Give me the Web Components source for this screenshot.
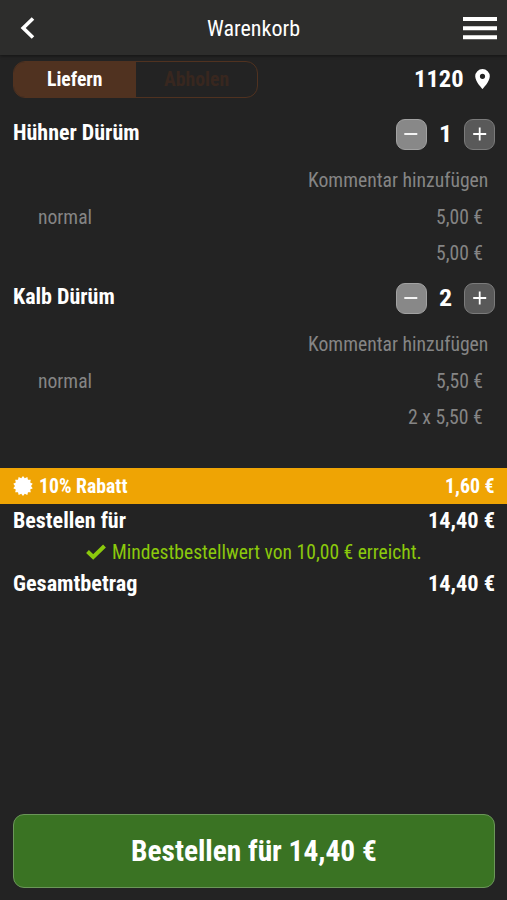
<!DOCTYPE html>
<html lang="de">
<head>
<meta charset="utf-8">
<meta name="viewport" content="width=device-width, initial-scale=1">
<title>Warenkorb</title>
<style>
    body {
        margin: 0;
        background: #232323;
        color: #fff;
        font-family: "Roboto Condensed", Roboto, "Liberation Sans", sans-serif;
        font-stretch: 75%;
    }
</style>
</head>
<body>
<cart-page></cart-page>

<script>
// One line of text, condensed to a given width in pixels
class FitText extends HTMLElement {
    connectedCallback() {
        const shadowRoot = this.attachShadow({ mode: 'open' });
        const width = parseFloat(this.getAttribute('width'));
        shadowRoot.innerHTML = `
            <style>
                :host { display: block; flex: none; width: ${width}px; white-space: nowrap; line-height: 1.2; }
                span { display: inline-block; vertical-align: top; transform-origin: 0 50%; }
            </style>
            <span>${this.textContent}</span>
        `;
        const span = shadowRoot.querySelector('span');
        span.style.transform = `scaleX(${width / span.offsetWidth})`;
    }
}

class CartHeader extends HTMLElement {
    connectedCallback() {
        this.attachShadow({ mode: 'open' }).innerHTML = `
            <style>
                :host {
                    display: grid;
                    grid-template-columns: 1fr auto 1fr;
                    align-items: center;
                    height: 55px;
                    box-sizing: border-box;
                    padding: 0 10px 0 20px;
                    background: #2d2d2c;
                    box-shadow: 0 1px 3px rgba(0, 0, 0, 0.45);
                    font-size: 22.5px;
                    font-weight: 450;
                }
                svg { display: block; }
                .menu { justify-self: end; }
                .title { margin-right: 10px; padding-top: 1px; }
            </style>
            <svg width="16" height="24" viewBox="0 0 16 24"><path d="M13 2.5 3.2 12 13 21.5" fill="none" stroke="#fff" stroke-width="3.6"/></svg>
            <div class="title"><slot></slot></div>
            <svg class="menu" width="34" height="24" viewBox="0 0 34 24"><path d="M0 3h34M0 12.200h34M0 21.300h34" stroke="#fff" stroke-width="4"/></svg>
        `;
    }
}

class DeliveryBar extends HTMLElement {
    connectedCallback() {
        this.attachShadow({ mode: 'open' }).innerHTML = `
            <style>
                :host {
                    display: flex;
                    justify-content: space-between;
                    align-items: center;
                    height: 49px;
                    padding: 0 17px 0 13px;
                    font-weight: 700;
                }
                .toggle {
                    display: flex;
                    width: 245px;
                    height: 37px;
                    box-sizing: border-box;
                    border: 1.5px solid #503220;
                    border-radius: 12px;
                    overflow: hidden;
                    font-size: 20px;
                }
                .toggle div { flex: 1; display: flex; align-items: center; justify-content: center; padding-bottom: 1px; }
                .toggle .active { background: #503220; }
                .toggle .inactive { color: #38271f; }
                .zip { display: flex; align-items: center; gap: 11px; font-size: 24px; }
                svg { display: block; }
            </style>
            <div class="toggle">
                <div class="active"><fit-text width="56">Liefern</fit-text></div>
                <div class="inactive"><fit-text width="65">Abholen</fit-text></div>
            </div>
            <div class="zip">
                <fit-text width="50">1120</fit-text>
                <svg width="15" height="21" viewBox="0 0 15 21"><path fill="#fff" fill-rule="evenodd" d="M7.500 0A7.300 7.300 0 0 0 .2 7.300C.2 12.700 7.500 20 7.500 20S14.800 12.700 14.800 7.300A7.300 7.300 0 0 0 7.500 0Zm0 4.700a2.600 2.600 0 1 1 0 5.200 2.600 2.600 0 0 1 0-5.200Z"/></svg>
            </div>
        `;
    }
}

class QuantityStepper extends HTMLElement {
    connectedCallback() {
        this.attachShadow({ mode: 'open' }).innerHTML = `
            <style>
                :host { display: flex; align-items: center; justify-content: space-between; width: 99.5px; font-size: 24px; font-weight: 700; }
                button {
                    display: flex;
                    align-items: center;
                    justify-content: center;
                    width: 31px;
                    height: 31px;
                    padding: 0;
                    border: 1px solid #7b7b7b;
                    border-radius: 9px;
                    background: #595959;
                }
                .minus { background: #888; border-color: #a2a2a2; }
                path { stroke: #fff; stroke-width: 1.8; }
            </style>
            <button class="minus" aria-label="weniger"><svg width="14" height="14" viewBox="0 0 14 14"><path d="M.3 7h13"/></svg></button>
            <fit-text width="13">${this.getAttribute('value')}</fit-text>
            <button aria-label="mehr"><svg width="14" height="14" viewBox="0 0 14 14"><path d="M.2 7h13M6.700 .5v13"/></svg></button>
        `;
    }
}

class CartItem extends HTMLElement {
    connectedCallback() {
        this.attachShadow({ mode: 'open' }).innerHTML = `
            <style>
                :host { display: block; height: 164px; color: #858585; font-size: 20px; }
                .head {
                    display: flex;
                    justify-content: space-between;
                    align-items: flex-start;
                    height: 43.5px;
                    padding: 3.5px 12px 0 13px;
                    color: #fff;
                }
                .name { display: block; font-size: 22px; font-weight: 700; padding-top: 1px; }
                .row { display: flex; justify-content: space-between; align-items: center; height: 36px; padding: 0 24px 0 37.5px; }
                .comment { justify-content: flex-end; padding-right: 19px; height: 36.5px; }
            </style>
            <div class="head">
                <slot class="name" name="name"></slot>
                <quantity-stepper value="${this.getAttribute('quantity')}"></quantity-stepper>
            </div>
            <div class="row comment"><fit-text width="180">Kommentar hinzufügen</fit-text></div>
            <div class="row"><slot name="option"></slot><slot name="price"></slot></div>
            <div class="row"><span></span><slot name="total"></slot></div>
        `;
    }
}

class DiscountRow extends HTMLElement {
    connectedCallback() {
        // Badge outline with 14 teeth
        const points = Array.from({ length: 28 }, (_, i) => {
            const r = i % 2 ? 8 : 10;
            const a = i * Math.PI / 14;
            return `${(10 + r * Math.sin(a)).toFixed(2)},${(10 - r * Math.cos(a)).toFixed(2)}`;
        }).join(' ');
        this.attachShadow({ mode: 'open' }).innerHTML = `
            <style>
                :host {
                    display: flex;
                    align-items: center;
                    height: 36px;
                    margin-top: 11px;
                    padding: 0 12px 0 13px;
                    background: #efa404;
                    font-size: 19.5px;
                    font-weight: 700;
                }
                svg { margin-right: 6px; }
                slot { display: block; padding-top: 1px; }
                slot[name="amount"] { margin-left: auto; }
            </style>
            <svg width="20" height="20" viewBox="0 0 20 20"><polygon fill="#fff" points="${points}"/></svg>
            <slot></slot>
            <slot name="amount"></slot>
        `;
    }
}

class SumRow extends HTMLElement {
    connectedCallback() {
        this.attachShadow({ mode: 'open' }).innerHTML = `
            <style>
                :host {
                    display: flex;
                    justify-content: space-between;
                    align-items: center;
                    height: 33px;
                    box-sizing: border-box;
                    padding: 2px 12px 0 13px;
                    font-size: 22px;
                    font-weight: 700;
                }
            </style>
            <slot></slot>
        `;
    }
}

class MinimumNote extends HTMLElement {
    connectedCallback() {
        this.attachShadow({ mode: 'open' }).innerHTML = `
            <style>
                :host { display: flex; align-items: center; justify-content: center; gap: 6px; height: 30px; color: #8bc90c; font-size: 20px; }
            </style>
            <svg width="20" height="16" viewBox="0 0 20 16"><path d="M1.500 7.500 7.200 13 18.500 2" fill="none" stroke="currentColor" stroke-width="4"/></svg>
            <slot></slot>
        `;
    }
}

class OrderButton extends HTMLElement {
    connectedCallback() {
        this.attachShadow({ mode: 'open' }).innerHTML = `
            <style>
                :host { display: block; padding: 0 12px 12px 13px; }
                button {
                    display: flex;
                    align-items: center;
                    justify-content: center;
                    width: 100%;
                    height: 74px;
                    padding: 1px 1px 0 1px;
                    border: 1px solid #6b9659;
                    border-radius: 11px;
                    background: #3a7323;
                    color: #fff;
                    font: inherit;
                    font-size: 29.5px;
                    font-weight: 700;
                }
            </style>
            <button><slot></slot></button>
        `;
    }
}

class CartPage extends HTMLElement {
    connectedCallback() {
        this.attachShadow({ mode: 'open' }).innerHTML = `
            <style>
                :host { display: flex; flex-direction: column; height: 900px; }
                .items { flex: none; height: 353px; box-sizing: border-box; padding-top: 11px; }
                order-button { margin-top: auto; }
            </style>
            <cart-header><fit-text width="93">Warenkorb</fit-text></cart-header>
            <delivery-bar></delivery-bar>
            <div class="items">
                <cart-item quantity="1">
                    <fit-text slot="name" width="127">Hühner Dürüm</fit-text>
                    <fit-text slot="option" width="54">normal</fit-text>
                    <fit-text slot="price" width="47">5,00 €</fit-text>
                    <fit-text slot="total" width="47">5,00 €</fit-text>
                </cart-item>
                <cart-item quantity="2">
                    <fit-text slot="name" width="102">Kalb Dürüm</fit-text>
                    <fit-text slot="option" width="54">normal</fit-text>
                    <fit-text slot="price" width="47">5,50 €</fit-text>
                    <fit-text slot="total" width="75">2 x 5,50 €</fit-text>
                </cart-item>
            </div>
            <discount-row>
                <fit-text width="88">10% Rabatt</fit-text>
                <fit-text slot="amount" width="50">1,60 €</fit-text>
            </discount-row>
            <sum-row><fit-text width="113">Bestellen für</fit-text><fit-text width="67">14,40 €</fit-text></sum-row>
            <minimum-note><fit-text width="310">Mindestbestellwert von 10,00 € erreicht.</fit-text></minimum-note>
            <sum-row><fit-text width="124">Gesamtbetrag</fit-text><fit-text width="67">14,40 €</fit-text></sum-row>
            <order-button><fit-text width="246">Bestellen für 14,40 €</fit-text></order-button>
        `;
    }
}

customElements.define('fit-text', FitText);
customElements.define('cart-header', CartHeader);
customElements.define('delivery-bar', DeliveryBar);
customElements.define('quantity-stepper', QuantityStepper);
customElements.define('cart-item', CartItem);
customElements.define('discount-row', DiscountRow);
customElements.define('sum-row', SumRow);
customElements.define('minimum-note', MinimumNote);
customElements.define('order-button', OrderButton);
customElements.define('cart-page', CartPage);
</script>
</body>
</html>
